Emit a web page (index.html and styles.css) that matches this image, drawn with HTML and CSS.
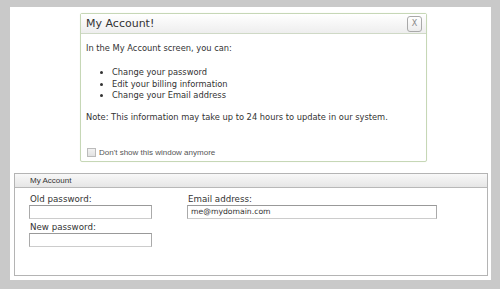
FILE: index.html
```html
<!DOCTYPE html>
<html>
<head>
<meta charset="utf-8">
<link rel="stylesheet" href="styles.css">
</head>
<body>
<div class="panel">
  <div class="dialog">
    <div class="dialog-head">
      <span class="dialog-title">My Account!</span>
      <span class="close">X</span>
    </div>
    <div class="dialog-body">
      <p class="intro">In the My Account screen, you can:</p>
      <ul class="list">
        <li>Change your password</li>
        <li>Edit your billing information</li>
        <li>Change your Email address</li>
      </ul>
      <p class="note">Note: This information may take up to 24 hours to update in our system.</p>
      <label class="dont"><span class="box"></span>Don't show this window anymore</label>
    </div>
  </div>
  <div class="fieldset">
    <div class="fs-head">My Account</div>
    <div class="fs-body">
      <div class="col col-left">
        <div class="label">Old password:</div>
        <div class="input"></div>
        <div class="label">New password:</div>
        <div class="input"></div>
      </div>
      <div class="col col-right">
        <div class="label">Email address:</div>
        <div class="input wide">me@mydomain.com</div>
      </div>
    </div>
  </div>
</div>
</body>
</html>
```
FILE: styles.css
```css
html, body { margin: 0; padding: 0; }
body {
  background: #c9c9c9;
  font-family: "DejaVu Sans", Verdana, sans-serif;
  color: #333;
  width: 500px;
  height: 289px;
  overflow: hidden;
}
.panel {
  margin: 7px 9px 0 10px;
  width: 481px;
  height: 273px;
  background: #fff;
  box-sizing: border-box;
  padding-top: 6px;
  display: flex;
  flex-direction: column;
}
.dialog {
  margin-left: 70px;
  width: 347px;
  height: 149px;
  box-sizing: border-box;
  border: 1px solid #c6d7b6;
  border-radius: 2px;
  box-shadow: 0 0 1px #dfe8d6;
  display: flex;
  flex-direction: column;
}
.dialog-head {
  height: 19px;
  border-bottom: 1px solid #cfd9c6;
  background: linear-gradient(#ffffff, #eeeeee);
  display: flex;
  align-items: center;
  justify-content: space-between;
  padding: 0 4px 0 5px;
}
.dialog-title {
  font-size: 11px;
  color: #333;
}
.close {
  width: 15px;
  height: 16px;
  box-sizing: border-box;
  border: 1px solid #a9a9a9;
  border-radius: 3px;
  background: linear-gradient(#ffffff, #ececec);
  font-family: "DejaVu Sans", Verdana, sans-serif;
  font-size: 8px;
  color: #888;
  display: flex;
  align-items: center;
  justify-content: center;
}
.dialog-body {
  padding: 0 5px;
  font-size: 8.3px;
  color: #333;
  flex: 1;
  display: flex;
  flex-direction: column;
}
.intro { margin: 9px 0 0; line-height: 11px; }
.list {
  margin: 13px 0 0;
  padding-left: 26px;
  line-height: 11.5px;
}
.list li { padding-left: 0; }
.note { margin: 10px 0 0; line-height: 11px; }
.dont {
  margin-top: auto;
  margin-bottom: 4px;
  display: flex;
  align-items: center;
  font-family: "Liberation Sans", Arial, sans-serif;
  font-size: 8px;
  color: #555;
}
.box {
  width: 7px;
  height: 7px;
  border: 1px solid #bbb;
  background: linear-gradient(#f2f2f2, #e2e2e2);
  margin-right: 3px;
  margin-left: 1px;
}
.fieldset {
  margin: 11px 3px 0 4px;
  height: 103px;
  box-sizing: border-box;
  border: 1px solid #b4b4b4;
}
.fs-head {
  height: 14px;
  box-sizing: border-box;
  border-bottom: 1px solid #b8b8b8;
  background: linear-gradient(#f8f8f8, #e6e6e6);
  font-family: "Liberation Sans", Arial, sans-serif;
  font-size: 8px;
  color: #333;
  padding-left: 15px;
  line-height: 13px;
}
.fs-body {
  display: flex;
  padding: 5px 0 0 14px;
  gap: 35px;
}
.col { display: flex; flex-direction: column; }
.label {
  font-size: 8.7px;
  color: #333;
  line-height: 12px;
  padding-left: 1px;
}
.input {
  width: 123px;
  height: 14px;
  box-sizing: border-box;
  border: 1px solid #aaa;
  border-top-color: #999;
  border-bottom-color: #ccc;
  margin-bottom: 2px;
  font-size: 7.7px;
  line-height: 12px;
  padding-left: 3px;
  color: #333;
}
.input.wide { width: 250px; }
```
